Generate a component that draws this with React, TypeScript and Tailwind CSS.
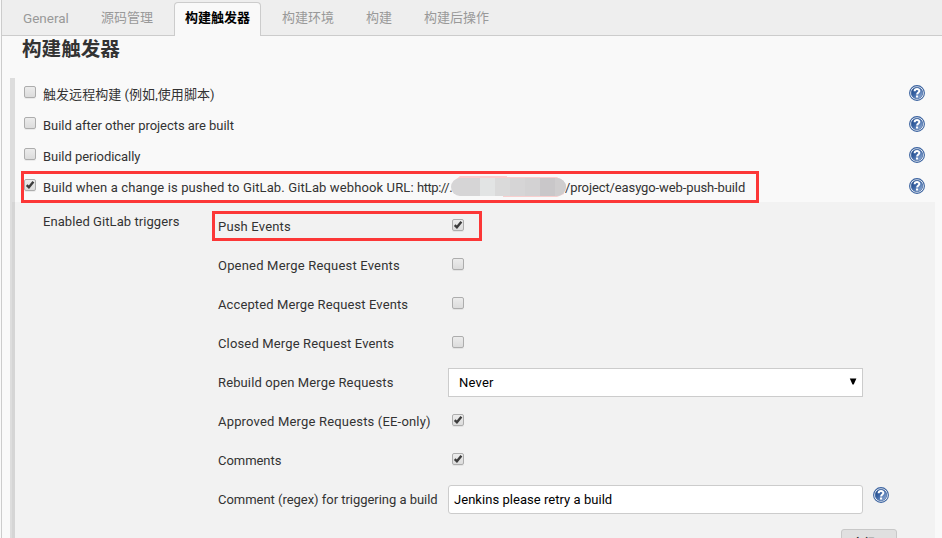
import React from "react";

function Check({ checked = false }: { checked?: boolean }) {
  return (
    <span className="block size-3 shrink-0 rounded-[2px] border border-[#adadad] bg-linear-to-b from-[#ececec] to-[#dcdcdc] shadow-[0_1px_0_rgba(0,0,0,0.06)]">
      {checked && (
        <svg viewBox="0 0 10 10" className="block size-[10px]">
          <path d="M1.7 5.2 L3.9 7.3 L8.4 1.8" fill="none" stroke="#3c3c3c" strokeWidth="2.4" />
        </svg>
      )}
    </span>
  );
}

function Help() {
  return (
    <svg viewBox="0 0 16 16" className="block size-4 shrink-0">
      <defs>
        <linearGradient id="ball" x1="0" y1="0" x2="1" y2="1">
          <stop offset="0" stopColor="#16407f" />
          <stop offset="0.45" stopColor="#3c66a6" />
          <stop offset="1" stopColor="#a6bde0" />
        </linearGradient>
      </defs>
      <circle cx="8" cy="8" r="7.4" fill="#fff" stroke="#3a629f" strokeWidth="1.1" />
      <circle cx="8" cy="8" r="5.8" fill="url(#ball)" stroke="#2d5797" strokeWidth="0.6" />
      <path d="M5.6 6.2 C5.7 3.4 10.5 3.5 10.4 6 C10.3 7.5 8.2 7.6 8.1 9.5" fill="none" stroke="#fff" strokeWidth="2" />
      <rect x="7" y="10.5" width="2.1" height="2" fill="#fff" />
    </svg>
  );
}

function TriggerRow({ children, checked }: { children: React.ReactNode; checked?: boolean }) {
  return (
    <div className="flex h-[31px] items-start pl-[9px] pr-[17px]">
      <div className="pt-2">
        <Check checked={checked} />
      </div>
      <div className="ml-[7px] mt-[7px] flex h-5 grow items-center whitespace-pre">{children}</div>
      <div className="pt-[7px]">
        <Help />
      </div>
    </div>
  );
}

function Setting({ label, tracking, children }: { label: string; tracking: string; children: React.ReactNode }) {
  return (
    <div className="flex h-[39px] items-center">
      <div className={`w-[230px] shrink-0 whitespace-nowrap pt-[2px] ${tracking}`}>{label}</div>
      {children}
    </div>
  );
}

function Box({ checked }: { checked?: boolean }) {
  return (
    <div className="pb-[2px] pl-1">
      <Check checked={checked} />
    </div>
  );
}

export default function App() {
  return (
    <div className="relative h-[538px] w-[942px] overflow-hidden bg-[#f9f9f9] pl-px font-['Roboto','Noto_Sans_CJK_SC',sans-serif] text-[13px] leading-5 text-[#333]">
      <div className="h-full border-l border-[#ccc]">
        <nav className="flex h-9 border-b border-[#ccc] bg-[#eee] text-[#999]">
          <span className="w-[99px] pl-[21px] pt-2 text-[13.5px]">General</span>
          <span className="w-[73px] pt-2">源码管理</span>
          <span className="mt-[2px] h-[34px] w-[87px] rounded-t-[4px] border border-b-0 border-[#ccc] bg-[#f9f9f9] pl-[10px] pt-[5px] font-bold text-black">构建触发器</span>
          <span className="w-[84px] pl-[21px] pt-2">构建环境</span>
          <span className="w-[58px] pl-[21px] pt-2">构建</span>
          <span className="pl-[21px] pt-2">构建后操作</span>
        </nav>
        <h2 className="h-[42px] pl-5 pt-px text-[19.6px] font-bold leading-[25px]">构建触发器</h2>
        <main className="ml-2 flex h-[460px]">
          <div className="w-[5px] shrink-0 bg-[#ddd]">
            <div className="ml-[2px] mt-[124px] h-[336px] bg-[#d5d5d5]" />
          </div>
          <div className="grow">
            <TriggerRow><span className="tracking-[0.05px]">触发远程构建 (例如,使用脚本)</span></TriggerRow>
            <TriggerRow><span className="tracking-[-0.04px]">Build after other projects are built</span></TriggerRow>
            <TriggerRow><span className="tracking-[-0.04px]">Build periodically</span></TriggerRow>
            <TriggerRow checked>
              <span className="w-[374px] tracking-[0.12px]">Build when a change is pushed to GitLab. GitLab webhook URL:</span>
              <span className="w-[148px] tracking-[-0.45px]">http://.</span>
              <span className="tracking-[-0.11px]">/project/easygo-web-push-build</span>
            </TriggerRow>
            <section className="mr-[7px] flex h-[336px] bg-[#f2f2f2] pl-7">
              <div className="w-[175px] shrink-0 pt-[10px] tracking-[0.07px]">Enabled GitLab triggers</div>
              <div className="w-[682px] pt-1">
                <Setting label="Push Events" tracking="tracking-[0.18px]"><Box checked /></Setting>
                <Setting label="Opened Merge Request Events" tracking="tracking-[0.19px]"><Box /></Setting>
                <Setting label="Accepted Merge Request Events" tracking="tracking-[0.11px]"><Box /></Setting>
                <Setting label="Closed Merge Request Events" tracking="tracking-[0.15px]"><Box /></Setting>
                <Setting label="Rebuild open Merge Requests" tracking="tracking-[0.12px]">
                  <div className="mt-[2px] flex h-[29px] w-[415px] items-center justify-between border border-[#ccc] bg-white pl-[10px] pr-[5px] text-black">
                    <span className="pt-px tracking-[0.2px]">Never</span>
                    <svg viewBox="0 0 8 7" className="mb-[2px] h-[7px] w-2"><path d="M0.8 0.5h6.6L4.7 6.5H3.5z" fill="#000" /></svg>
                  </div>
                </Setting>
                <Setting label="Approved Merge Requests (EE-only)" tracking="tracking-[0.18px]"><Box checked /></Setting>
                <Setting label="Comments" tracking="tracking-[-0.04px]"><Box checked /></Setting>
                <Setting label="Comment (regex) for triggering a build" tracking="tracking-[-0.03px]">
                  <div className="mt-[2px] flex h-[29px] w-[415px] items-center rounded-[3px] border border-[#ccc] bg-white pl-[5px] tracking-[0.04px] text-black">Jenkins please retry a build</div>
                  <div className="mb-[7px] ml-[10px]"><Help /></div>
                </Setting>
                <div className="ml-[623px] mt-[11px] h-8 w-14 rounded-[3px] border border-[#c8c8c8] bg-[#e0e0e0] pt-1 text-center text-xs font-bold leading-5 text-[#333]">高级...</div>
              </div>
            </section>
          </div>
        </main>
      </div>
      <svg viewBox="0 0 116 22" className="absolute left-[451px] top-[176px] h-[22px] w-[116px]">
        <defs><clipPath id="smear"><rect y="2" width="115" height="18" rx="9" /></clipPath></defs>
        <path d="M9 0H56V1H106L113 6V18L106 21H52V20H9L2 15V6z" fill="#f9cfcf" />
        <g clipPath="url(#smear)">
          <rect width="116" height="22" fill="#d6d5d6" />
          <rect x="29" width="15" height="22" fill="#e2e4e4" />
          <rect x="44" width="15" height="22" fill="#dadada" />
          <rect x="74" width="15" height="22" fill="#d3d2d3" />
          <rect x="89" width="15" height="22" fill="#c9c7c9" />
          <rect x="104" width="12" height="22" fill="#cfcdce" />
        </g>
      </svg>
      <div className="absolute left-[21px] top-[171px] h-8 w-[738px] border-3 border-[#fc3737]" />
      <div className="absolute left-[212px] top-[211px] h-[30px] w-[270px] border-3 border-[#fc3737]" />
    </div>
  );
}
